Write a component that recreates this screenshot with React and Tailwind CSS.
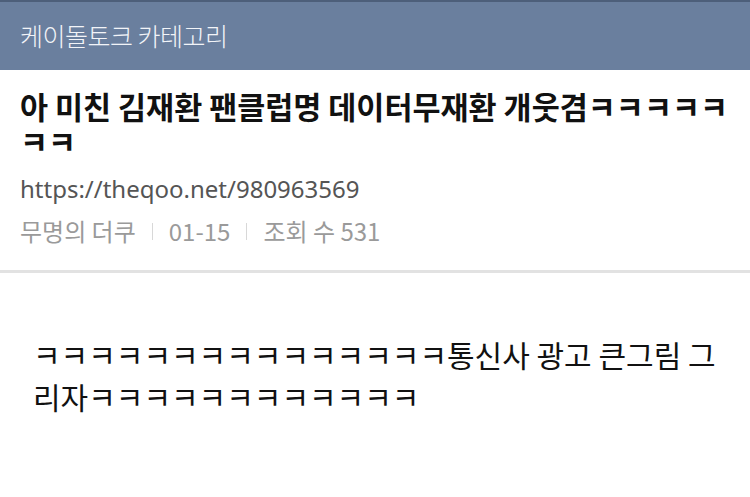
import React from "react";

const font = { fontFamily: '"Noto Sans CJK KR", "Noto Sans", sans-serif' };

export default function App() {
  return (
    <div className="w-[750px] h-[497px] bg-white overflow-hidden" style={font}>
      <div className="h-[70px] bg-[#6a7f9e] border-t-2 border-[#4d5f7a] flex items-center px-5">
        <span className="text-[25px] text-[#f2f4f8] font-light tracking-[-0.5px]">케이돌토크 카테고리</span>
      </div>
      <div className="px-5 pt-[19px] pb-[24px] border-b-[3px] border-[#e2e2e2]">
        <h1 className="text-[30.5px] font-bold leading-[35px] text-[#111]">
          아 미친 김재환 팬클럽명 데이터무재환 개웃겸ㅋㅋㅋㅋㅋㅋㅋ
        </h1>
        <div className="mt-[15px] text-[24px] leading-[30px] text-[#555]" style={{ fontFamily: '"Noto Sans", sans-serif' }}>
          https://theqoo.net/980963569
        </div>
        <div className="mt-[12px] flex items-center text-[24px] leading-[30px] text-[#9a9a9a]">
          <span>무명의 더쿠</span>
          <span className="mx-[16px] w-px h-[17px] bg-[#d8d8d8]"></span>
          <span>01-15</span>
          <span className="mx-[16px] w-px h-[17px] bg-[#d8d8d8]"></span>
          <span>조회 수 531</span>
        </div>
      </div>
      <div className="pl-[33px] pr-[20px] pt-[60px] text-[30px] leading-[42px] text-[#111]">
        ㅋㅋㅋㅋㅋㅋㅋㅋㅋㅋㅋㅋㅋㅋㅋ통신사 광고 큰그림 그리자ㅋㅋㅋㅋㅋㅋㅋㅋㅋㅋㅋㅋ
      </div>
    </div>
  );
}
